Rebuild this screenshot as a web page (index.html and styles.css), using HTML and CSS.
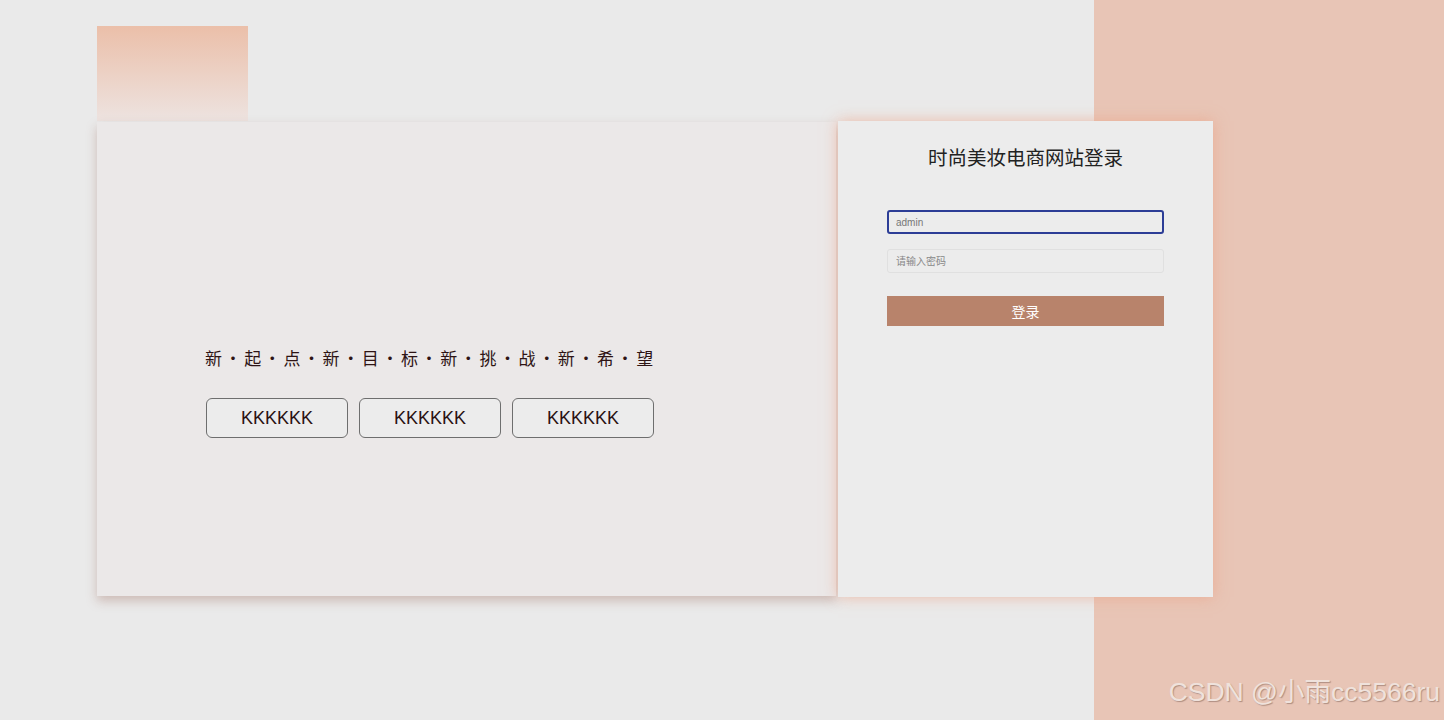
FILE: index.html
```html
<!DOCTYPE html>
<html lang="zh-CN">

<head>
    <meta charset="UTF-8">
    <meta name="viewport" content="width=device-width, initial-scale=1.0">
    <title>时尚美妆电商网站登录</title>
    <link rel="stylesheet" href="styles.css">
</head>

<body>
    <div class="deco"></div>
    <div class="wrap">
        <div class="banner">
            <p class="slogan">新・起・点・新・目・标・新・挑・战・新・希・望</p>
            <div class="tags">
                <button class="tag">KKKKKK</button>
                <button class="tag">KKKKKK</button>
                <button class="tag">KKKKKK</button>
            </div>
        </div>
        <div class="login">
            <h2>时尚美妆电商网站登录</h2>
            <form id="loginForm">
                <input type="text" class="field focus" value="admin">
                <input type="password" class="field" placeholder="请输入密码">
                <input type="button" class="btn" value="登录">
            </form>
        </div>
    </div>
    <div class="mark">CSDN @小雨cc5566ru</div>
</body>

</html>
```

FILE: styles.css
```css
body {
    font-family: "Liberation Sans", "Noto Sans CJK SC", sans-serif;
    margin: 0;
    height: 720px;
    overflow: hidden;
    background: linear-gradient(to right, #eaeaea 1094px, #e8c5b6 1094px);
    color: #333;
}

.deco {
    margin: 26px 0 0 97px;
    width: 151px;
    height: 95px;
    background: linear-gradient(to bottom, #ebbfa9, #ede3e0);
}

.wrap {
    display: flex;
    align-items: center;
    gap: 2px;
    margin-left: 97px;
}

.banner {
    width: 739px;
    height: 474px;
    box-sizing: border-box;
    padding-left: 109px;
    background-color: #ebe8e8;
    box-shadow: 0 5px 10px rgba(170, 130, 120, 0.45);
}

.slogan {
    margin: 226px 0 0 -1px;
    font-family: "Noto Sans CJK SC", sans-serif;
    font-size: 17px;
    line-height: 20px;
    letter-spacing: 2.6px;
    color: #2e1414;
}

.tags {
    display: flex;
    gap: 11px;
    margin-top: 30px;
}

.tag {
    width: 142px;
    height: 40px;
    background-color: #ececec;
    border: 1px solid #6e6e6e;
    border-radius: 6px;
    font-family: "Liberation Sans", sans-serif;
    font-size: 18px;
    color: #2a1212;
}

.login {
    width: 375px;
    height: 476px;
    box-sizing: border-box;
    padding-top: 22px;
    background-color: #ececec;
    box-shadow: 0 0 14px rgba(236, 160, 130, 0.65);
}

.login h2 {
    margin: 0;
    text-align: center;
    font-family: "Noto Sans CJK SC", sans-serif;
    font-weight: normal;
    font-size: 19.5px;
    line-height: 28px;
    color: #222;
}

#loginForm {
    display: flex;
    flex-direction: column;
    align-items: center;
    margin-top: 39px;
}

.field {
    width: 277px;
    height: 24px;
    box-sizing: border-box;
    padding: 0 8px;
    margin-bottom: 15px;
    background-color: #ececec;
    border: 1px solid #e0e0e0;
    border-radius: 3px;
    font-family: "Liberation Sans", "Noto Sans CJK SC", sans-serif;
    font-size: 10px;
    color: #777;
    outline: none;
}

.field::placeholder {
    color: #888;
}

.field.focus {
    border: 2px solid #2c3d96;
    padding: 0 7px;
}

.btn {
    width: 277px;
    height: 30px;
    margin-top: 8px;
    background-color: #b8836b;
    color: #fff;
    border: none;
    font-family: "Noto Sans CJK SC", sans-serif;
    font-size: 14px;
    cursor: pointer;
}

.mark {
    position: absolute;
    right: 4px;
    bottom: 11px;
    font-family: "Liberation Sans", "Noto Sans CJK SC", sans-serif;
    font-size: 26.5px;
    color: #efe2dc;
    text-shadow: 1px 1px 1px rgba(120, 90, 80, 0.5);
}
```
